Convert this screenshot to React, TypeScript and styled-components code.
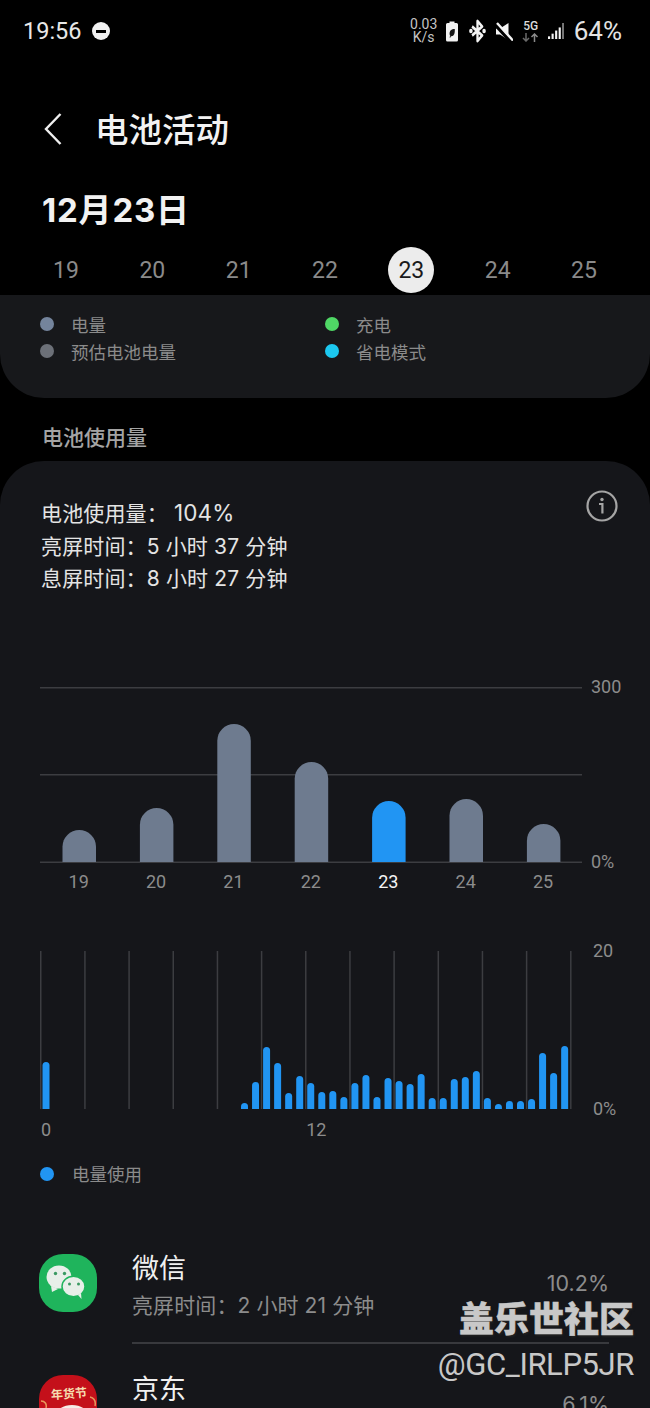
import React from 'react';
import styled, { createGlobalStyle } from 'styled-components';

const days = [19, 20, 21, 22, 23, 24, 25];
const weekBars = [32, 54, 138, 100, 61, 63, 38];
// 第一根柱子在 0 点，其余从 9 点左右开始
const hourBars = [6, 27, 62, 46, 16, 33, 26, 17, 18, 12, 26, 34, 12, 31, 28, 25, 35, 11, 11, 30, 32, 38, 11, 5, 8, 8, 10, 56, 36, 63];

const App = (): JSX.Element => (
  <Page>
    <GlobalStyle />
    <StatusBar>
      <StatusLeft>
        <Clock>19:56</Clock>
        <DndIcon />
      </StatusLeft>
      <StatusRight>
        <NetSpeed>0.03<br />K/s</NetSpeed>
        <svg width="14" height="21" viewBox="0 0 14 20">
          <path d="M4.500 0h5v1.600h2A1.500 1.500 0 0 1 13 3.100v15.400a1.500 1.500 0 0 1-1.500 1.500h-9A1.500 1.500 0 0 1 1 18.500V3.100a1.500 1.500 0 0 1 1.500-1.500h2z" fill="#f2f2f2" />
          <path d="M9.800 7.500c-3.500 0-5.400 1.800-5.200 5.200.1 .8.400 1.300.7 1.500L4.500 15.800l.7.400.8-1.500c3 .3 4-2.800 3.800-7.200z" fill="#141414" />
        </svg>
        <svg width="17" height="24" viewBox="0 0 22 24" fill="none" stroke="#f4f4f4" preserveAspectRatio="none">
          <path d="M4 7.500l13 9L11 22V2l6 5.500-13 9" strokeWidth="3" strokeLinejoin="round" />
          <circle cx="2.500" cy="12" r="2.300" fill="#f4f4f4" stroke="none" />
          <circle cx="19.500" cy="12" r="2.300" fill="#f4f4f4" stroke="none" />
        </svg>
        <svg width="18" height="19" viewBox="0 0 18 19">
          <path d="M1 6.500h4L13.500 1v17L5 12.500H1z" fill="#f4f4f4" />
          <path d="M0 2.500l15.500 17" stroke="#000" strokeWidth="3.500" />
          <path d="M2 1l16 17.500" stroke="#f4f4f4" strokeWidth="2.400" />
        </svg>
        <NetType>
          <span>5G</span>
          <svg width="17" height="9" viewBox="0 0 17 9" fill="none" strokeWidth="1.500">
            <path d="M4 0v8M1 5l3 3 3-3" stroke="#6a6a6a" />
            <path d="M12.500 9V1M9.500 4l3-3 3 3" stroke="#8a8a8a" />
          </svg>
        </NetType>
        <svg width="16" height="18" viewBox="0 0 18 18">
          <rect x="0" y="15" width="2.400" height="3" fill="#f4f4f4" />
          <rect x="4" y="12" width="2.400" height="6" fill="#f4f4f4" />
          <rect x="8" y="8.500" width="2.400" height="9.500" fill="#f4f4f4" />
          <rect x="12" y="5" width="2.400" height="13" fill="#f4f4f4" />
          <rect x="15.800" y="0" width="2.200" height="18" fill="#777" />
        </svg>
        <BatteryText>64%</BatteryText>
      </StatusRight>
    </StatusBar>

    <Header>
      <BackIcon width="20" height="34" viewBox="0 0 20 34" fill="none">
        <path d="M17.500 2L3 17l14.500 15" stroke="#efefef" strokeWidth="2.400" />
      </BackIcon>
      <Title>电池活动</Title>
    </Header>

    <DateTitle>12月23日</DateTitle>

    <DayRow>
      {days.map((day) => (
        <Day key={day} $active={day === 23}>{day}</Day>
      ))}
    </DayRow>

    <LegendPanel>
      <LegendItem><Dot $color="#74849c" />电量</LegendItem>
      <LegendItem><Dot $color="#4fd765" />充电</LegendItem>
      <LegendItem><Dot $color="#6c7078" />预估电池电量</LegendItem>
      <LegendItem><Dot $color="#1cc8f0" />省电模式</LegendItem>
    </LegendPanel>

    <SectionTitle>电池使用量</SectionTitle>

    <Card>
      <Summary>
        <SummaryText>
          <div>电池使用量： <SummaryValue>104%</SummaryValue></div>
          <div>亮屏时间：5 小时 37 分钟</div>
          <div>息屏时间：8 小时 27 分钟</div>
        </SummaryText>
        <svg width="32" height="32" viewBox="0 0 32 32" fill="none">
          <circle cx="16" cy="16" r="14.500" stroke="#a5a5a5" strokeWidth="2.200" />
          <circle cx="16" cy="9.500" r="1.700" fill="#a5a5a5" />
          <path d="M13 14h3.400v9.500" stroke="#a5a5a5" strokeWidth="2.200" />
        </svg>
      </Summary>

      <WeekChart>
        <WeekPlot>
          <svg width="542" height="176" viewBox="0 0 542 176">
            <g fill="#3c3d41">
              <rect x="0" y="0" width="542" height="1.500" />
              <rect x="0" y="87" width="542" height="1.500" />
              <rect x="0" y="174.500" width="542" height="1.500" />
            </g>
            {weekBars.map((height, index) => {
              const x = 22.500 + index * 77.400;
              const top = 175 - height;
              return (
                <path
                  key={days[index]}
                  d={`M${x} 175V${top + 16.750}a16.750 16.750 0 0 1 33.500 0V175z`}
                  fill={days[index] === 23 ? '#2195f3' : '#6e7b8f'}
                />
              );
            })}
          </svg>
          <YLabels $height={176}>
            <span>300</span>
            <span>0%</span>
          </YLabels>
        </WeekPlot>
        <WeekLabels>
          {days.map((day) => (
            <WeekLabel key={day} $active={day === 23}>{day}</WeekLabel>
          ))}
        </WeekLabels>
      </WeekChart>

      <HourChart>
        <HourPlot>
          <svg width="532" height="159" viewBox="0 0 532 159">
            {Array.from({ length: 13 }, (_, index) => (
              <rect key={index} x={index * 44.170} y="0" width="1.500" height="158" fill="#3c3d41" />
            ))}
            <path d="M2.500 158V114.500a3.500 3.500 0 0 1 7 0V158z" fill="#2195f3" />
            {hourBars.map((height, index) => (
              <path
                key={index}
                d={`M${201 + index * 11.040} 158V${158 - height + 3.500}a3.500 3.500 0 0 1 7 0V158z`}
                fill="#2195f3"
              />
            ))}
          </svg>
          <YLabels $height={159}>
            <span>20</span>
            <span>0%</span>
          </YLabels>
        </HourPlot>
        <HourLabels>
          <span>0</span>
          <span>12</span>
        </HourLabels>
      </HourChart>

      <UsageLegend><Dot $color="#2195f3" />电量使用</UsageLegend>

      <AppRow>
        <AppIcon $bg="#1fb45c">
          <svg width="58" height="58" viewBox="0 0 58 58">
            <ellipse cx="20" cy="23" rx="12.500" ry="11.500" fill="#e8efe9" />
            <path d="M12 32l1 6 6-3z" fill="#e8efe9" />
            <circle cx="16.500" cy="19.500" r="1.700" fill="#3b9a62" />
            <circle cx="25.500" cy="19.500" r="1.700" fill="#3b9a62" />
            <ellipse cx="34.500" cy="32.500" rx="11.500" ry="10.300" fill="#e8efe9" stroke="#1fb45c" strokeWidth="1.500" />
            <path d="M39 41l3.500 4-.5-6z" fill="#e8efe9" />
            <circle cx="30.500" cy="30" r="1.500" fill="#3b9a62" />
            <circle cx="39.500" cy="30" r="1.500" fill="#3b9a62" />
          </svg>
        </AppIcon>
        <AppBody>
          <AppMain>
            <AppName>微信</AppName>
            <AppTime>亮屏时间：2 小时 21 分钟</AppTime>
          </AppMain>
          <AppPercent>10.2%</AppPercent>
        </AppBody>
      </AppRow>

      <AppRowNext>
        <AppIcon $bg="#c4101a">
          <svg width="58" height="58" viewBox="0 0 58 58">
            <text x="30" y="23" textAnchor="middle" fontSize="12" fontWeight="700" fill="#f6dcb0" fontFamily="'Noto Sans CJK SC', sans-serif" transform="rotate(-4 30 20)">年货节</text>
            <ellipse cx="33" cy="42" rx="17" ry="12" fill="#f5ece6" />
            <path d="M2 26c4 0 6 3 5 7M51 22c4 1 6 4 5 9" stroke="#e8985c" strokeWidth="1.500" fill="none" />
          </svg>
        </AppIcon>
        <AppBody $plain>
          <AppMain>
            <AppName>京东</AppName>
          </AppMain>
          <AppPercent>6.1%</AppPercent>
        </AppBody>
      </AppRowNext>
    </Card>

    <Watermark>
      <WatermarkTitle>盖乐世社区</WatermarkTitle>
      <WatermarkId>@GC_IRLP5JR</WatermarkId>
    </Watermark>
  </Page>
);

const GlobalStyle = createGlobalStyle`
  html, body {
    margin: 0;
    padding: 0;
    background: #000;
  }

  body {
    font-family: Roboto, "Noto Sans CJK SC", sans-serif;
  }

  svg {
    display: block;
    flex: none;
  }
`;

const Page = styled.div`
  position: relative;
  width: 650px;
  height: 1408px;
  overflow: hidden;
  background: #000;
  color: #f0f0f0;
`;

const StatusBar = styled.div`
  display: flex;
  justify-content: space-between;
  align-items: center;
  height: 62px;
  padding: 0 28px 0 23px;
`;

const StatusLeft = styled.div`
  display: flex;
  align-items: center;
  gap: 10px;
`;

const Clock = styled.span`
  font-size: 23.500px;
  color: #e8e8e8;
`;

const DndIcon = styled.span`
  position: relative;
  width: 18px;
  height: 18px;
  border-radius: 50%;
  background: #f2f2f2;

  &::after {
    content: '';
    position: absolute;
    left: 4px;
    right: 4px;
    top: 7.500px;
    height: 3px;
    background: #000;
  }
`;

const StatusRight = styled.div`
  display: flex;
  align-items: center;
  gap: 9.500px;
`;

const NetSpeed = styled.span`
  width: 28px;
  margin-right: -2px;
  font-size: 14px;
  line-height: 13.500px;
  text-align: center;
  color: #c4c4c4;
`;

const NetType = styled.span`
  display: flex;
  flex-direction: column;
  align-items: center;
  gap: 1px;
  width: 16px;
  font-size: 12px;
  line-height: 11px;
  font-weight: 500;
  color: #dcdcdc;
`;

const BatteryText = styled.span`
  font-size: 26px;
  color: #e4e4e4;
`;

const Header = styled.div`
  display: flex;
  align-items: center;
  gap: 32px;
  height: 50px;
  margin-top: 44px;
  padding-left: 43px;
`;

const BackIcon = styled.svg`
  margin-bottom: 5px;
`;

const Title = styled.h1`
  margin: 0;
  font-size: 33.500px;
  line-height: 50px;
  font-weight: 500;
  color: #f2f2f2;
`;

const DateTitle = styled.div`
  height: 44px;
  margin-top: 32px;
  padding-left: 42px;
  font-family: Inter, "Noto Sans CJK SC", sans-serif;
  font-size: 33px;
  line-height: 44px;
  font-weight: 700;
  letter-spacing: 0.800px;
  color: #f2f2f2;
`;

const DayRow = styled.div`
  display: grid;
  grid-template-columns: repeat(7, 46px);
  justify-content: space-between;
  height: 46px;
  margin-top: 15px;
  padding: 0 43px;
`;

const Day = styled.span<{ $active: boolean }>`
  display: flex;
  align-items: center;
  justify-content: center;
  width: 46px;
  height: 46px;
  border-radius: 50%;
  font-size: 23px;
  background: ${({ $active }) => ($active ? '#ececec' : 'transparent')};
  color: ${({ $active }) => ($active ? '#1a1a1a' : '#8a8a8a')};
`;

const LegendPanel = styled.div`
  display: grid;
  grid-template-columns: 285px 1fr;
  grid-auto-rows: 27px;
  height: 103px;
  box-sizing: border-box;
  margin-top: 2px;
  padding: 16px 40px 0;
  border-radius: 0 0 44px 44px;
  background: #17181b;
`;

const LegendItem = styled.div`
  display: flex;
  align-items: center;
  gap: 17px;
  font-size: 17.500px;
  color: #8b8b8b;
`;

const Dot = styled.span<{ $color: string }>`
  width: 14px;
  height: 14px;
  margin-bottom: 2px;
  border-radius: 50%;
  background: ${({ $color }) => $color};
`;

const SectionTitle = styled.div`
  height: 28px;
  margin-top: 26px;
  padding-left: 42px;
  font-size: 21px;
  line-height: 28px;
  font-weight: 500;
  color: #a4a4a4;
`;

const Card = styled.div`
  height: 960px;
  margin-top: 9px;
  border-radius: 44px 44px 0 0;
  background: #15161a;
`;

const Summary = styled.div`
  display: flex;
  justify-content: space-between;
  align-items: flex-start;
  padding: 29px 32px 0 41px;
`;

const SummaryText = styled.div`
  margin-top: 8px;
  font-family: Inter, "Noto Sans CJK SC", sans-serif;
  font-size: 21px;
  line-height: 32.500px;
  letter-spacing: 0.150px;
  color: #e4e4e4;
`;

const SummaryValue = styled.span`
  font-size: 22.500px;
  line-height: 1;
`;

const WeekChart = styled.div`
  margin-top: 91px;
  padding-left: 40px;
`;

const WeekPlot = styled.div`
  display: flex;
  gap: 9px;
`;

const YLabels = styled.div<{ $height: number }>`
  display: flex;
  flex-direction: column;
  justify-content: space-between;
  height: ${({ $height }) => $height + 19}px;
  margin: -10px 0;
  font-size: 18px;
  line-height: 20px;
  color: #8c8c8c;
`;

const WeekLabels = styled.div`
  display: grid;
  grid-template-columns: repeat(7, 77.400px);
  margin-top: 8px;
`;

const WeekLabel = styled.span<{ $active: boolean }>`
  font-size: 18px;
  line-height: 22px;
  text-align: center;
  color: ${({ $active }) => ($active ? '#f4f4f4' : '#8c8c8c')};
`;

const HourChart = styled.div`
  margin-top: 58.500px;
  padding-left: 40px;
`;

const HourPlot = styled.div`
  display: flex;
  gap: 21px;
`;

const HourLabels = styled.div`
  display: flex;
  gap: 255px;
  margin-top: 9px;
  padding-left: 1px;
  font-size: 18px;
  line-height: 22px;
  color: #8c8c8c;
`;

const UsageLegend = styled.div`
  display: flex;
  align-items: center;
  gap: 18px;
  margin-top: 23px;
  padding-left: 40px;
  font-size: 17.500px;
  line-height: 22px;
  color: #8b8b8b;
`;

const AppRow = styled.div`
  display: flex;
  align-items: flex-start;
  gap: 35px;
  margin-top: 68px;
  padding: 0 41px 0 39px;
`;

const AppRowNext = styled(AppRow)`
  margin-top: 31px;
`;

const AppIcon = styled.div<{ $bg: string }>`
  flex: none;
  width: 58px;
  height: 58px;
  overflow: hidden;
  border-radius: 24px;
  background: ${({ $bg }) => $bg};
`;

const AppBody = styled.div<{ $plain?: boolean }>`
  flex: 1;
  display: flex;
  justify-content: space-between;
  align-items: flex-start;
  height: ${({ $plain }) => ($plain ? 60 : 89)}px;
  margin-top: -1px;
  border-bottom: ${({ $plain }) => ($plain ? 'none' : '2px solid #38393d')};
`;

const AppMain = styled.div`
  padding-top: 1px;
`;

const AppName = styled.div`
  font-size: 27px;
  line-height: 30px;
  color: #f0f0f0;
`;

const AppTime = styled.div`
  margin-top: 8px;
  font-family: Inter, "Noto Sans CJK SC", sans-serif;
  font-size: 21px;
  line-height: 28px;
  letter-spacing: 0.100px;
  color: #8c8c8c;
`;

const AppPercent = styled.span`
  margin-top: 18px;
  font-family: Inter, "Noto Sans CJK SC", sans-serif;
  font-size: 21.500px;
  line-height: 24px;
  color: #8c8c8c;
`;

const Watermark = styled.div`
  position: absolute;
  right: 16px;
  top: 1298px;
  display: flex;
  flex-direction: column;
  align-items: flex-end;
`;

const WatermarkTitle = styled.div`
  font-size: 35px;
  line-height: 46px;
  font-weight: 900;
  color: #c8c8c8;
  -webkit-text-stroke: 0.500px #c8c8c8;
  text-shadow: 1px 2px 2px #222;
`;

const WatermarkId = styled.div`
  font-size: 31px;
  line-height: 42px;
  letter-spacing: -0.400px;
  color: #c8c8c8;
`;

export default App;
